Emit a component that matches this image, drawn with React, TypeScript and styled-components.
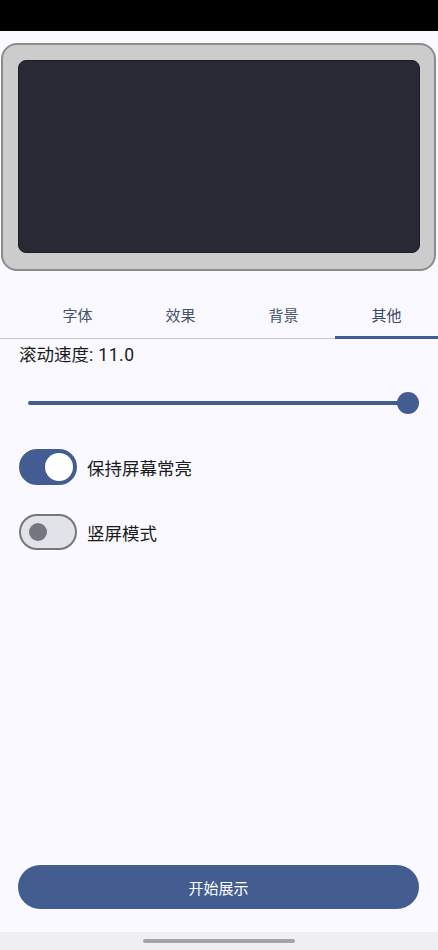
import { FC } from 'react'
import styled, { createGlobalStyle } from 'styled-components'

const GlobalStyle = createGlobalStyle`
	html, body {
		margin: 0;
		padding: 0;
		background: #f9f9ff;
		font-family: Roboto, 'Noto Sans CJK SC', sans-serif;
	}
	* {
		box-sizing: border-box;
	}
`

const Screen = styled.div`
	display: flex;
	flex-direction: column;
	width: 438px;
	height: 950px;
	background: #f9f9ff;
	overflow: hidden;
`

const StatusBar = styled.div`
	height: 31px;
	background: #000;
	flex: 0 0 auto;
`

const Frame = styled.div`
	margin: 12px 2px 0 1px;
	height: 228px;
	padding: 15px 14px 16px 15px;
	background: #cccccc;
	border: 2px solid #8c8c8c;
	border-radius: 16px;
	flex: 0 0 auto;
`

const Display = styled.div`
	height: 100%;
	background: #272a35;
	border-radius: 8px;
	border: 1px solid #1c1e25;
`

const TabBar = styled.div`
	display: flex;
	margin-top: 19px;
	padding-left: 26px;
	height: 49px;
	border-bottom: 1px solid #c9c9cf;
	flex: 0 0 auto;
`

const Tab = styled.div<{ $active?: boolean }>`
	width: 103px;
	display: flex;
	align-items: center;
	justify-content: center;
	font-size: 15px;
	color: ${p => (p.$active ? '#3d4a66' : '#47526b')};
	border-bottom: 3px solid ${p => (p.$active ? '#435d92' : 'transparent')};
	margin-bottom: -1px;
	padding-top: 2px;
`

const Panel = styled.div`
	display: flex;
	flex-direction: column;
	flex: 1 1 auto;
`

const SpeedLabel = styled.div`
	margin: 5px 0 0 19px;
	font-size: 17.5px;
	line-height: 22px;
	color: #1a1c20;

	& .value {
		margin-left: 5px;
		letter-spacing: 0.6px;
	}
`

const SliderRow = styled.div`
	display: flex;
	align-items: center;
	height: 44px;
	margin-top: 15px;
	padding: 0 19px 0 28px;
`

const Track = styled.div`
	flex: 1 1 auto;
	height: 4px;
	border-radius: 2px;
	background: #435d92;
`

const Thumb = styled.div`
	width: 22px;
	height: 22px;
	margin-left: -11px;
	border-radius: 50%;
	background: #435d92;
	flex: 0 0 auto;
`

const SwitchRow = styled.div<{ $gap: number }>`
	display: flex;
	align-items: center;
	gap: 10px;
	height: 36px;
	margin: ${p => p.$gap}px 0 0 19px;
	font-size: 17.5px;
	color: #1a1c20;
`

const Switch = styled.div<{ $on?: boolean }>`
	display: flex;
	align-items: center;
	justify-content: ${p => (p.$on ? 'flex-end' : 'flex-start')};
	width: 58px;
	height: 36px;
	border-radius: 18px;
	padding: ${p => (p.$on ? '0 4px' : '0 8px')};
	background: ${p => (p.$on ? '#435d92' : '#e2e2e9')};
	border: ${p => (p.$on ? 'none' : '2px solid #74777f')};
	flex: 0 0 auto;
`

const Knob = styled.div<{ $on?: boolean }>`
	width: ${p => (p.$on ? 28 : 18)}px;
	height: ${p => (p.$on ? 28 : 18)}px;
	border-radius: 50%;
	background: ${p => (p.$on ? '#ffffff' : '#74777f')};
`

const StartButton = styled.button`
	margin: auto 19px 23px 18px;
	height: 44px;
	border: none;
	border-radius: 22px;
	background: #445d91;
	color: #fff;
	font-family: inherit;
	font-size: 15px;
	flex: 0 0 auto;
`

const NavBar = styled.div`
	height: 18px;
	background: #f0f0f3;
	display: flex;
	justify-content: center;
	padding-top: 7px;
	flex: 0 0 auto;
`

const Handle = styled.div`
	width: 152px;
	height: 4px;
	border-radius: 2px;
	background: #a4a4a6;
`

const tabs = ['字体', '效果', '背景', '其他']

const ToggleRow: FC<{ on: boolean; label: string; gap: number }> = ({ on, label, gap }) => (
	<SwitchRow $gap={gap}>
		<Switch $on={on}>
			<Knob $on={on} />
		</Switch>
		<span>{label}</span>
	</SwitchRow>
)

export default function App() {
	return (
		<Screen>
			<GlobalStyle />
			<StatusBar />
			<Frame>
				<Display />
			</Frame>
			<TabBar>
				{tabs.map((t, i) => (
					<Tab key={t} $active={i === 3}>
						{t}
					</Tab>
				))}
			</TabBar>
			<Panel>
				<SpeedLabel>
					滚动速度:<span className='value'>11.0</span>
				</SpeedLabel>
				<SliderRow>
					<Track />
					<Thumb />
				</SliderRow>
				<ToggleRow on label='保持屏幕常亮' gap={24} />
				<ToggleRow on={false} label='竖屏模式' gap={29} />
				<StartButton>开始展示</StartButton>
			</Panel>
			<NavBar>
				<Handle />
			</NavBar>
		</Screen>
	)
}
